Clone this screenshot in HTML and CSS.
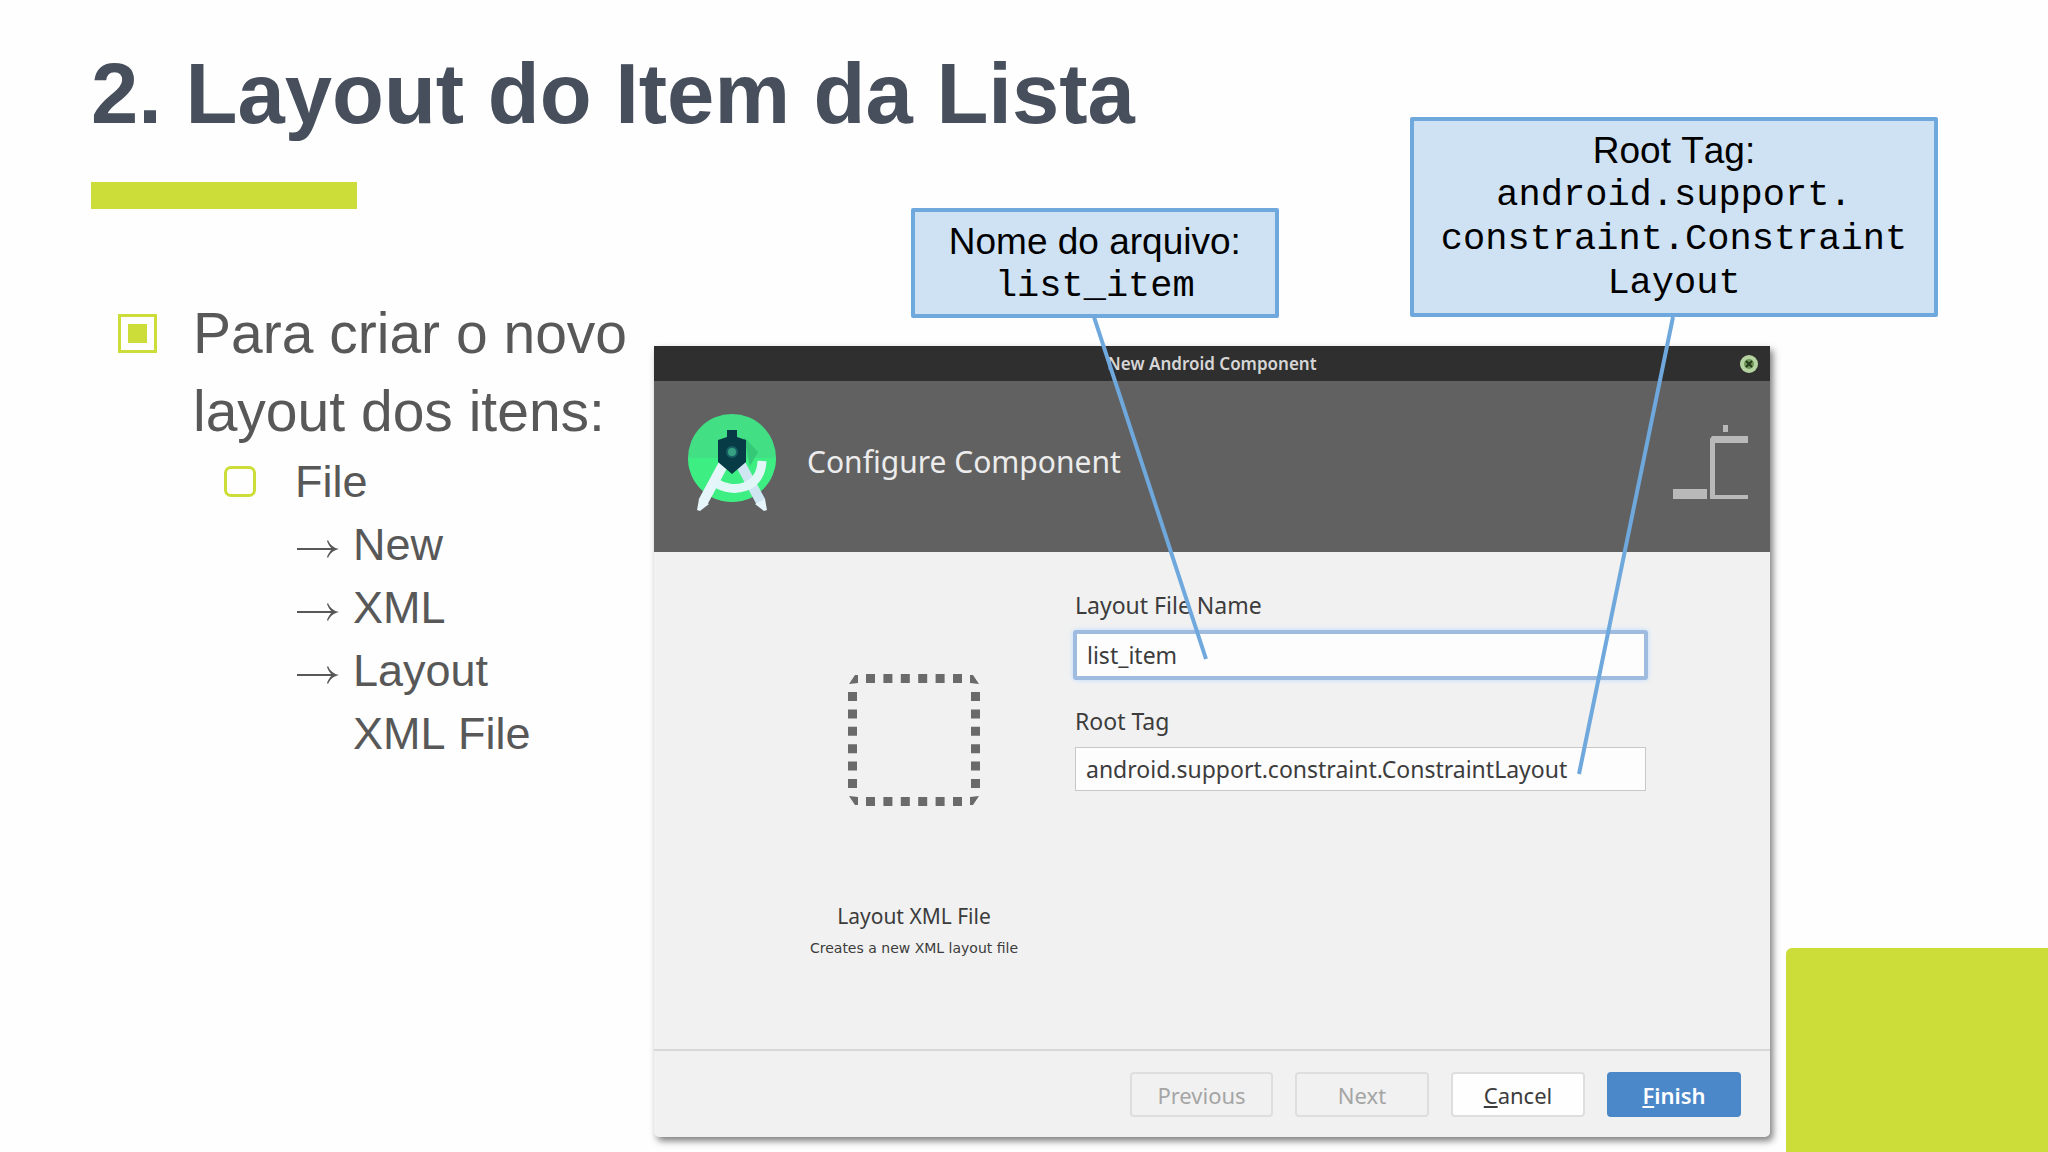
FILE: index.html
```html
<!DOCTYPE html>
<html lang="pt-BR">
<head>
<meta charset="UTF-8">
<title>2. Layout do Item da Lista</title>
<link rel="stylesheet" href="styles.css">
</head>

<body>

<div class="slide">

  <div class="corner"></div>

  <!-- TITLE -->
  <header class="slide-header">
    <h1>2. Layout do Item da Lista</h1>
    <div class="accent"></div>
  </header>

  <main class="content">

    <!-- STEPS -->
    <ul class="steps">
      <li>
        <div class="step">
          <span class="bullet"></span>
          <p>Para criar o novo layout dos itens:</p>
        </div>
        <ul class="substeps">
          <li class="substep">
            <span class="bullet-small"></span>
            <div>
              <p>File</p>
              <p class="arrow-line">
                <svg viewBox="0 0 42 20" width="42" height="20"><path d="M0 10h38" stroke="#585858" stroke-width="2"/><path d="M31 1c2 5 6 8 11 9c-5 1-9 4-11 9l-1-1c1-3 3-6 5-8c-2-2-4-5-5-8z" fill="#585858"/></svg>
                New
              </p>
              <p class="arrow-line">
                <svg viewBox="0 0 42 20" width="42" height="20"><path d="M0 10h38" stroke="#585858" stroke-width="2"/><path d="M31 1c2 5 6 8 11 9c-5 1-9 4-11 9l-1-1c1-3 3-6 5-8c-2-2-4-5-5-8z" fill="#585858"/></svg>
                XML
              </p>
              <p class="arrow-line">
                <svg viewBox="0 0 42 20" width="42" height="20"><path d="M0 10h38" stroke="#585858" stroke-width="2"/><path d="M31 1c2 5 6 8 11 9c-5 1-9 4-11 9l-1-1c1-3 3-6 5-8c-2-2-4-5-5-8z" fill="#585858"/></svg>
                Layout
              </p>
              <p class="indent">XML File</p>
            </div>
          </li>
        </ul>
      </li>
    </ul>

    <div class="stage">

      <!-- DIALOG -->
      <form class="dialog">
        <div class="titlebar">
          <span class="titlebar-text">New Android Component</span>
          <button type="button" class="close" aria-label="Close">
            <svg viewBox="0 0 18 18" width="18" height="18">
              <circle cx="9" cy="9" r="9" fill="#b5d3a0"/>
              <circle cx="9" cy="9" r="5" fill="#6f9659"/>
              <path d="M6 6l6 6M12 6l-6 6" stroke="#25391b" stroke-width="2"/>
            </svg>
          </button>
        </div>

        <div class="banner">
          <svg class="logo" viewBox="0 0 90 98" width="90" height="98">
            <circle cx="45" cy="45" r="44" fill="#42df84"/>
            <path d="M1 45h88a44 44 0 0 1-88 0z" fill="#3dee82"/>
            <path d="M57 24l14 15-8 14z" fill="#35c977"/>
            <path d="M36 52L16 89" stroke="#e6f5fa" stroke-width="10"/>
            <path d="M54 52l20 37" stroke="#cfe6f2" stroke-width="10"/>
            <path d="M12 86l-2 11 3 1 9-7zM78 86l2 11-3 1-9-7z" fill="#e6f5fa"/>
            <path d="M29 70c17 11 45 6 46-22" fill="none" stroke="#e0f6f7" stroke-width="9"/>
            <path d="M40 17h10v7l9 3v22L45 61 31 49V27l9-3z" fill="#073c47"/>
            <circle cx="45" cy="39" r="5" fill="#36a083" stroke="#175f62" stroke-width="2"/>
          </svg>
          <h2>Configure Component</h2>
          <svg class="banner-icon" viewBox="0 0 76 76" width="76" height="76">
            <path d="M50 1h5v7h-5zM39 12h36v7H42v52h33v4H37V15zM0 65h34v10H0z" fill="#b9b9b9"/>
          </svg>
        </div>

        <div class="dialog-body">
          <div class="template">
            <svg viewBox="0 0 132 132" width="132" height="132">
              <path d="M18 4.500h96M18 127.500h96M4.500 18v96M127.500 18v96" stroke="#6a6a6a" stroke-width="9" stroke-dasharray="9 8.400"/>
              <path d="M1 10l6-9 3 0v8zM131 10l-6-9-3 0v8zM1 122l6 9h3v-8zM131 122l-6 9h-3v-8z" fill="#6a6a6a"/>
            </svg>
            <h3>Layout XML File</h3>
            <p>Creates a new XML layout file</p>
          </div>

          <div class="fields">
            <label for="fileName">Layout File Name</label>
            <input class="active" id="fileName" type="text" value="list_item">
            <label for="rootTag">Root Tag</label>
            <input id="rootTag" type="text" value="android.support.constraint.ConstraintLayout">
          </div>
        </div>

        <div class="dialog-footer">
          <button type="button" class="btn btn-wide" disabled>Previous</button>
          <button type="button" class="btn" disabled>Next</button>
          <button type="button" class="btn"><u>C</u>ancel</button>
          <button type="button" class="btn btn-primary"><u>F</u>inish</button>
        </div>
      </form>

      <!-- CALLOUTS -->
      <svg class="connectors" viewBox="0 0 1116 460" preserveAspectRatio="none">
        <path d="M440 0L552 342M1019 0L925 457" fill="none" stroke="#6fa8dc" stroke-width="4"/>
      </svg>
      <div class="callout callout-name">
        Nome do arquivo:
        <code>list_item</code>
      </div>
      <div class="callout callout-root">
        Root Tag:
        <code>android.support.<br>constraint.Constraint<br>Layout</code>
      </div>

    </div>
  </main>
</div>

</body>
</html>
```
FILE: styles.css
```css
* {box-sizing:border-box;}

body {
  margin:0; background:#fefefe; color:#585858;
  font-family:"Liberation Sans", Arial, sans-serif;
}

h1, h2, h3, p, ul {margin:0; padding:0; font-weight:normal;}
ul {list-style:none;}

.slide {position:relative; min-height:100vh; overflow:hidden;}

.corner {
  position:absolute; right:0; bottom:0;
  width:262px; height:204px;
  background:#ccdd39; border-radius:6px 0 0 0;
}

/* title */
.slide-header {padding:45px 91px 0;}

.slide-header h1 {
  font-size:85px; line-height:98px; font-weight:bold; color:#474f5c;
}

.accent {width:266px; height:27px; margin-top:39px; background:#ccdd39;}

.content {
  display:grid; grid-template-columns:563px 1fr;
  padding:0 278px 0 91px;
}

/* steps */
.steps {padding:85px 0 0 27px; font-kerning:none;}
.step {display:flex; gap:36px; font-size:57px; line-height:78px;}
.step p {flex:1;}

.bullet {
  width:39px; height:39px; margin-top:20px; padding:7px;
  border:3px solid #ccdd39;
  background:#ccdd39 content-box;
}

.substep {
  display:flex; gap:39px; padding-left:106px;
  font-size:45px; line-height:63px;
}

.bullet-small {
  width:32px; height:31px; margin-top:16px;
  border:3px solid #ccdd39; border-radius:7px;
}

.arrow-line {display:flex; align-items:center; gap:14px; padding-left:2px;}
.arrow-line svg {margin-top:8px;}
.indent {padding-left:58px;}

/* dialog */
.stage {position:relative; padding-top:137px;}

.dialog {
  background:#f1f1f1; color:#3c3c3c;
  font-family:"Noto Sans", sans-serif; font-size:22px;
  border-radius:0 0 5px 5px;
  box-shadow:3px 4px 7px rgba(0,0,0,0.5);
}

.titlebar {
  display:flex; align-items:center; height:35px; padding:0 12px;
  background:#2f2f2f; color:#d6d6d6;
}

.titlebar-text {flex:1; padding-left:18px; text-align:center; font-size:17px; line-height:24px; font-weight:600;}
.close {display:flex; padding:0; border:none; background:none; cursor:pointer;}

.banner {
  display:flex; align-items:center; height:171px; padding:0 21px 10px 33px;
  background:#616161; color:#ececec;
}

.banner h2 {flex:1; padding-left:30px; font-size:30px;}

.dialog-body {
  display:grid; grid-template-columns:419px 1fr;
  height:497px; padding-right:122px;
}

.template {
  display:flex; flex-direction:column; align-items:center;
  padding:122px 0 0 101px; white-space:nowrap;
}

.template h3 {margin-top:95px; font-size:21px; line-height:30px;}
.template p {margin-top:6px; font-family:"DejaVu Sans", sans-serif; font-size:14px; line-height:22px;}

.fields {display:flex; flex-direction:column; padding-top:37px; font-size:23px;}
.fields label {padding-left:2px; line-height:32px;}

.fields input {
  height:44px; margin:10px 2px 0; padding:0 10px;
  border:1px solid #c8c8c8; background:#fdfdfd;
  color:#3c3c3c; font:inherit; outline:none;
}

.fields input.active {
  height:50px; margin:9px 0 25px; padding:0 10px;
  border:4px solid #9fbbe0; border-radius:3px;
  box-shadow:0 0 5px #bcdcff;
}

.dialog-footer {
  display:flex; justify-content:flex-end; gap:22px;
  height:88px; padding:21px 29px 0;
  border-top:2px solid #d7d7d7;
}

.btn {
  width:134px; height:45px; padding:0;
  border:2px solid #dedede; border-radius:4px;
  background:#fefefe; color:#3c3c3c; font:inherit; cursor:pointer;
}

.btn-wide {width:143px;}
.btn:disabled {background:#f1f1f1; color:#a5a5a5; cursor:default;}
.btn-primary {border-color:#4a87c7; background:#4a88ca; color:white; font-weight:600;}

/* callouts */
.connectors {
  position:absolute; top:108px; left:0;
  width:100%; height:460px; pointer-events:none;
}

.callout {
  position:absolute; padding:8px 0 6px;
  border:4px solid #6fa8dc; border-radius:2px;
  background:#cfe2f3; color:black; font-kerning:none;
  font-size:37px; line-height:44px; text-align:center; white-space:nowrap;
}

.callout code {display:block; font-family:"Liberation Mono", "Courier New", monospace;}
.callout-name {top:-1px; left:23%; width:33%;}
.callout-root {top:-92px; right:-168px; width:528px; padding:8px 0;}
```
